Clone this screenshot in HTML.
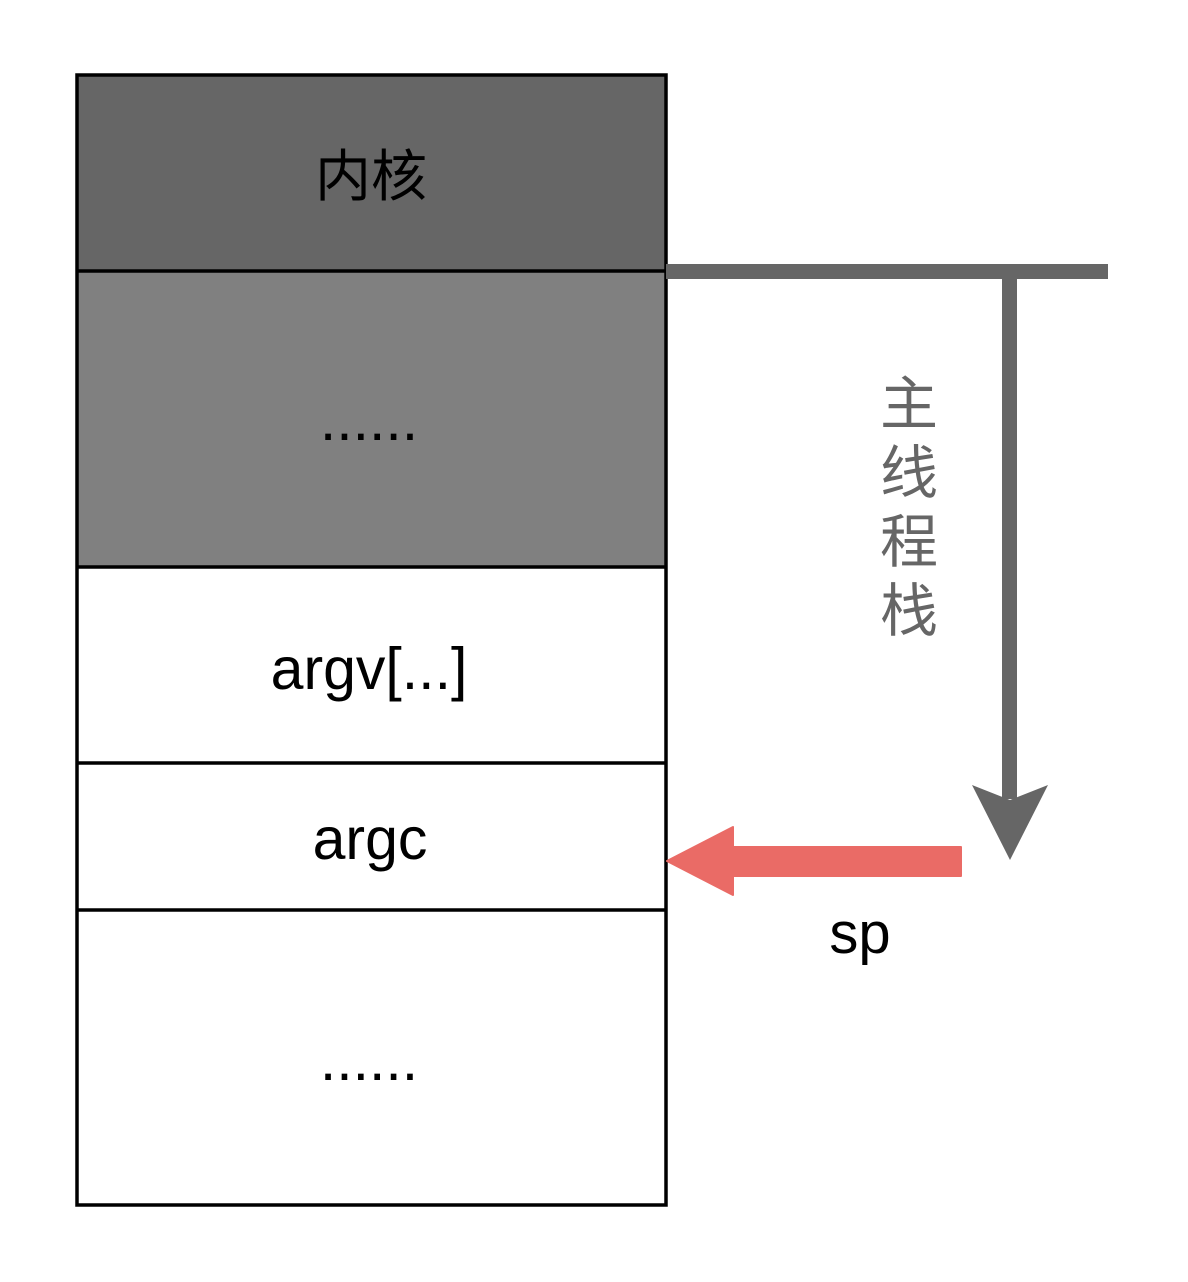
<!DOCTYPE html>
<html><head><meta charset="utf-8"><style>
html,body{margin:0;padding:0;background:#fff;}
svg{display:block;}
</style></head><body>
<svg width="1188" height="1282" viewBox="0 0 1188 1282" xmlns="http://www.w3.org/2000/svg">
<rect x="0" y="0" width="1188" height="1282" fill="#fff"/>
<rect x="77" y="75" width="589" height="196" fill="#666666"/>
<rect x="77" y="271" width="589" height="296" fill="#808080"/>
<rect x="77" y="75" width="589" height="1130" fill="none" stroke="#000" stroke-width="3.5"/>
<line x1="77" y1="271" x2="666" y2="271" stroke="#000" stroke-width="3.5"/>
<line x1="77" y1="567" x2="666" y2="567" stroke="#000" stroke-width="3.5"/>
<line x1="77" y1="763" x2="666" y2="763" stroke="#000" stroke-width="3.5"/>
<line x1="77" y1="910" x2="666" y2="910" stroke="#000" stroke-width="3.5"/>
<g font-family="Liberation Sans, Noto Sans CJK SC, sans-serif" fill="#000" text-anchor="middle">
<text x="371" y="196" font-size="56">内核</text>
<text x="369" y="440" font-size="59">......</text>
<text x="369" y="689" font-size="59">argv[...]</text>
<text x="370" y="859" font-size="59">argc</text>
<text x="369" y="1080" font-size="59">......</text>
<text x="860" y="953" font-size="58">sp</text>
</g>
<g font-family="Liberation Sans, Noto Sans CJK SC, sans-serif" fill="#666" text-anchor="middle" font-size="58">
<text x="909" y="424">主</text>
<text x="909" y="493">线</text>
<text x="909" y="562">程</text>
<text x="909" y="631">栈</text>
</g>
<rect x="666" y="264" width="442" height="15" fill="#666"/>
<rect x="1002" y="279" width="15" height="520" fill="#666"/>
<polygon points="972,785 1010,800 1048,785 1010,860" fill="#666"/>
<polygon points="667,861 733,827 733,847 961,847 961,876 733,876 733,895" fill="#ea6b66" stroke="#ea6b66" stroke-width="2" stroke-linejoin="round"/>
</svg>
</body></html>
